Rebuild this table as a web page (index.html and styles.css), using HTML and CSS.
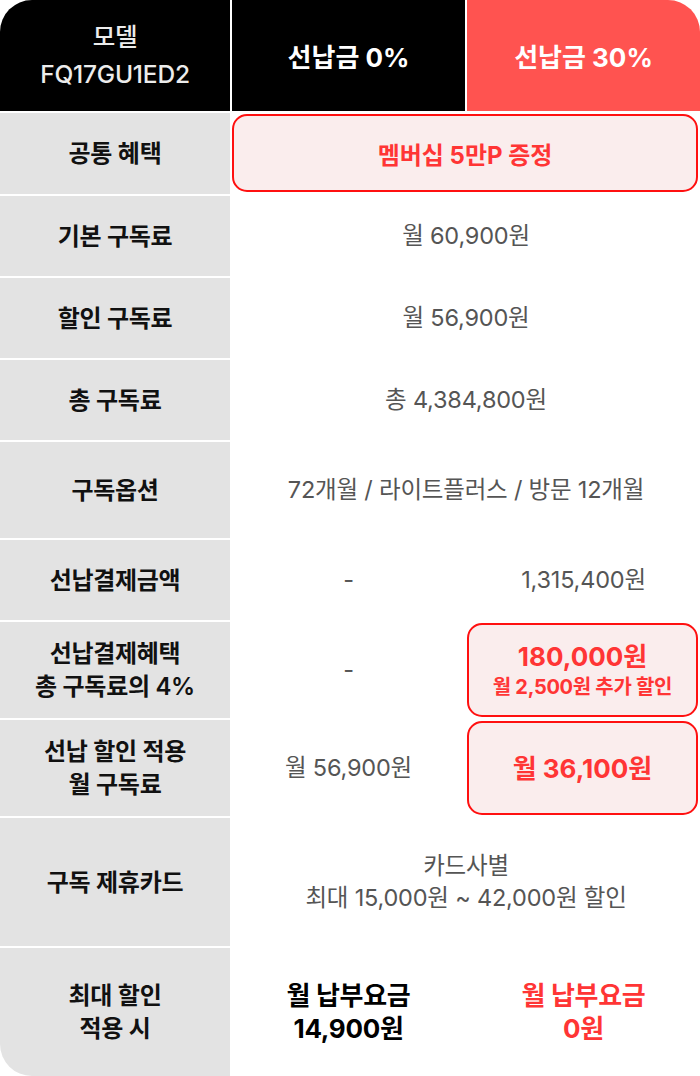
FILE: index.html
```html
<!DOCTYPE html>
<html lang="ko">
<head>
<meta charset="utf-8">
<link rel="stylesheet" href="styles.css">
</head>
<body>
<div class="table">
  <div class="cell head head-model">모델<br>FQ17GU1ED2</div>
  <div class="cell head head-black">선납금 0%</div>
  <div class="cell head head-red">선납금 30%</div>

  <div class="cell label">공통 혜택</div>
  <div class="cell span"><div class="hl hl-wide">멤버십 5만P 증정</div></div>

  <div class="cell label">기본 구독료</div>
  <div class="cell span val">월 60,900원</div>

  <div class="cell label">할인 구독료</div>
  <div class="cell span val">월 56,900원</div>

  <div class="cell label">총 구독료</div>
  <div class="cell span val">총 4,384,800원</div>

  <div class="cell label tall">구독옵션</div>
  <div class="cell span val">72개월 / 라이트플러스 / 방문 12개월</div>

  <div class="cell label">선납결제금액</div>
  <div class="cell val dash">-</div>
  <div class="cell val">1,315,400원</div>

  <div class="cell label">선납결제혜택<br>총 구독료의 4%</div>
  <div class="cell val dash">-</div>
  <div class="cell"><div class="hl"><span class="hl-big">180,000원</span><span class="hl-small">월 2,500원 추가 할인</span></div></div>

  <div class="cell label">선납 할인 적용<br>월 구독료</div>
  <div class="cell val">월 56,900원</div>
  <div class="cell"><div class="hl"><span class="hl-big">월 36,100원</span></div></div>

  <div class="cell label">구독 제휴카드</div>
  <div class="cell span val two">카드사별<br>최대 15,000원 ~ 42,000원 할인</div>

  <div class="cell label">최대 할인<br>적용 시</div>
  <div class="cell total">월 납부요금<br>14,900원</div>
  <div class="cell total red">월 납부요금<br>0원</div>
</div>
</body>
</html>
```
FILE: styles.css
```css
html, body {
  margin: 0;
  padding: 0;
  background: #ffffff;
}
body {
  font-family: "Inter", "Noto Sans CJK KR", sans-serif;
  width: 700px;
}
.table {
  display: grid;
  grid-template-columns: 230px 233px 233px;
  grid-template-rows: 111px 81px 80px 80px 80px 96px 80px 96px 96px 128px 128px;
  column-gap: 2px;
  row-gap: 2px;
  border-radius: 32px;
  overflow: hidden;
  width: 700px;
  height: 1076px;
}
.cell {
  display: flex;
  align-items: center;
  justify-content: center;
  text-align: center;
  min-width: 0;
}
.head {
  color: #ffffff;
  font-weight: 700;
  font-size: 26px;
  background: #000000;
}
.head-model {
  font-weight: 500;
  font-size: 24.5px;
  line-height: 37px;
  color: #ececec;
  letter-spacing: -0.2px;
}
.head-red {
  background: #ff5350;
}
.label {
  background: #e3e3e3;
  color: #111111;
  font-weight: 600;
  font-size: 24px;
  line-height: 33px;
  letter-spacing: -0.3px;
}
.span {
  grid-column: 2 / 4;
}
.val {
  color: #555555;
  font-size: 23.5px;
  font-weight: 400;
  line-height: 32px;
  letter-spacing: -0.2px;
}
.hl {
  align-self: stretch;
  flex: 1;
  margin: 1px 2px 1px 0;
  border: 2px solid #ff1010;
  border-radius: 15px;
  background: #faeded;
  color: #ff3535;
  font-weight: 700;
  display: flex;
  flex-direction: column;
  align-items: center;
  justify-content: center;
}
.hl-wide {
  margin-bottom: 2px;
  font-size: 24px;
}
.hl-big {
  font-size: 26px;
  line-height: 33px;
}
.hl-small {
  font-size: 20px;
  line-height: 28px;
  letter-spacing: -0.3px;
}
.total {
  font-weight: 700;
  font-size: 26px;
  line-height: 33px;
  color: #000000;
  letter-spacing: -0.3px;
}
.total.red {
  color: #ff3535;
}
```
